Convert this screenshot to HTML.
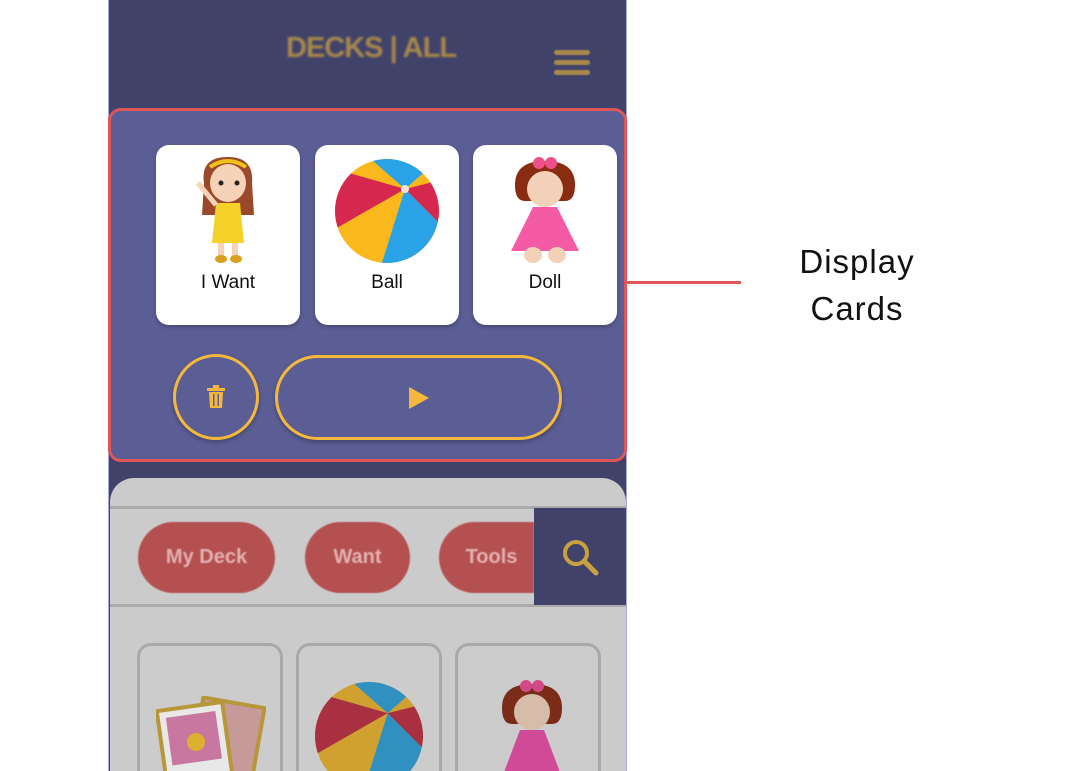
<!DOCTYPE html>
<html><head><meta charset="utf-8"><style>
html,body{margin:0;width:1080px;height:771px;overflow:hidden}
body{background:#fff;position:relative;font-family:"Liberation Sans",sans-serif}
.a{position:absolute}
.card{position:absolute;background:#fff;border-radius:13px;top:145px;width:144px;height:180px;box-shadow:0 2px 4px rgba(0,0,0,.25)}
.card span{position:absolute;left:0;right:0;top:127px;text-align:center;font-size:19px;color:#111}
.chip{position:absolute;top:522px;height:71px;background:#b55050;border-radius:36px;color:#e2b0b0;font-size:20px;line-height:71px;text-align:center;font-weight:bold;filter:blur(.5px)}
.lc{position:absolute;top:643px;width:140px;height:140px;border:3px solid #a9a9a9;border-radius:14px;background:#cccccc}
</style></head><body>
<div class="a" style="left:108px;top:0;width:519px;height:771px;background:#40426a;border-left:1px solid #a9a9e0;border-right:1px solid #a9a9e0;box-sizing:border-box"></div>
<div class="a" style="left:286px;top:32px;font-size:29px;font-weight:bold;color:#a9894b;letter-spacing:-1px;filter:blur(1px)">DECKS | ALL</div>
<div class="a" style="left:554px;top:50px;width:36px;height:5px;background:#a9894b;border-radius:3px;box-shadow:0 10px 0 #a9894b,0 20px 0 #a9894b;filter:blur(.6px)"></div>
<div class="a" style="left:108px;top:108px;width:519px;height:354px;background:#5b5e95;border:3px solid #e05555;border-radius:13px;box-sizing:border-box"></div>
<div class="card" style="left:156px"><svg class="a" style="left:30px;top:8px" width="84" height="112" viewBox="0 0 84 112"><path d="M18 30 Q14 4 42 4 Q68 4 66 30 L68 62 L16 62Z" fill="#9a4a2a"/><ellipse cx="42" cy="30" rx="18" ry="19" fill="#f6d2b8"/><path d="M24 14 Q42 2 60 14" stroke="#f2c21b" stroke-width="4" fill="none"/><circle cx="35" cy="30" r="2.5" fill="#222"/><circle cx="51" cy="30" r="2.5" fill="#222"/><path d="M30 50 L54 50 L58 90 L26 90Z" fill="#f5d22a"/><path d="M30 52 L12 30" stroke="#f6d2b8" stroke-width="5"/><rect x="32" y="90" width="6" height="14" fill="#f6d2b8"/><rect x="46" y="90" width="6" height="14" fill="#f6d2b8"/><ellipse cx="35" cy="106" rx="6" ry="4" fill="#d9a020"/><ellipse cx="50" cy="106" rx="6" ry="4" fill="#d9a020"/></svg><span>I Want</span></div>
<div class="card" style="left:315px"><svg class="a" style="left:20px;top:14px" width="104" height="104" viewBox="0 0 104 104"><defs><clipPath id="c"><circle cx="52" cy="52" r="52"/></clipPath></defs><g clip-path="url(#c)"><rect width="104" height="104" fill="#fbb81c"/><path d="M70 30 L0 10 L0 70Z" fill="#d6284f"/><path d="M70 30 L30 -5 L110 -5Z" fill="#2aa3e6"/><path d="M70 30 L110 20 L110 70Z" fill="#d6284f"/><path d="M70 30 L110 70 L104 110 L45 110Z" fill="#2aa3e6"/></g><circle cx="70" cy="30" r="4" fill="#f4e6d6"/></svg><span>Ball</span></div>
<div class="card" style="left:473px"><svg class="a" style="left:30px;top:10px" width="84" height="110" viewBox="0 0 84 110"><path d="M12 30 Q12 6 42 6 Q72 6 72 30 Q72 46 62 46 L22 46 Q12 46 12 30Z" fill="#8a2c12"/><ellipse cx="42" cy="34" rx="18" ry="18" fill="#f3d0b8"/><path d="M24 18 Q42 10 60 20 L60 14 Q42 4 24 14Z" fill="#8a2c12"/><circle cx="36" cy="8" r="6" fill="#f0508a"/><circle cx="48" cy="8" r="6" fill="#f0508a"/><path d="M30 52 L54 52 L76 96 L8 96Z" fill="#f55aa5"/><ellipse cx="30" cy="100" rx="9" ry="8" fill="#f3d0b8"/><ellipse cx="54" cy="100" rx="9" ry="8" fill="#f3d0b8"/></svg><span>Doll</span></div>
<div class="a" style="left:173px;top:354px;width:86px;height:86px;border:3px solid #f5b83d;border-radius:50%;box-sizing:border-box;box-shadow:0 2px 5px rgba(0,0,0,.3)"></div>
<svg class="a" style="left:205px;top:385px" width="22" height="24" viewBox="0 0 22 24"><rect x="2" y="3" width="18" height="3" fill="#f5b83d"/><rect x="8" y="0" width="6" height="3" fill="#f5b83d"/><path d="M4 7 H18 L17 23 H5Z" fill="#f5b83d"/><rect x="8" y="9" width="1.5" height="12" fill="#5b5e95"/><rect x="12.5" y="9" width="1.5" height="12" fill="#5b5e95"/></svg>
<div class="a" style="left:275px;top:355px;width:287px;height:85px;border:3px solid #f5b83d;border-radius:43px;box-sizing:border-box;box-shadow:0 2px 5px rgba(0,0,0,.3)"></div>
<svg class="a" style="left:409px;top:387px" width="20" height="22"><path d="M0 0 L20 11 L0 22Z" fill="#f5b83d"/></svg>
<div class="a" style="left:110px;top:478px;width:516px;height:293px;background:#cbcbcb;border-radius:24px 24px 0 0"></div>
<div class="a" style="left:110px;top:506px;width:516px;height:101px;border-top:3px solid #aaa;border-bottom:3px solid #aaa;box-sizing:border-box"></div>
<div class="chip" style="left:138px;width:137px">My Deck</div>
<div class="chip" style="left:305px;width:105px">Want</div>
<div class="chip" style="left:439px;width:95px;border-radius:36px 0 0 36px;text-indent:10px">Tools</div>
<div class="a" style="left:534px;top:508px;width:92px;height:97px;background:#40426a"></div>
<svg class="a" style="left:560px;top:537px" width="40" height="40"><circle cx="16" cy="16" r="11" stroke="#c9a040" stroke-width="4" fill="none"/><path d="M24 24 L36 36" stroke="#c9a040" stroke-width="5" stroke-linecap="round"/></svg>
<div class="lc" style="left:137px"><svg class="a" style="left:16px;top:50px" width="110" height="90"><rect x="40" y="6" width="62" height="80" fill="#c79a9a" stroke="#b8963a" stroke-width="4" transform="rotate(10 70 46)"/><rect x="6" y="10" width="66" height="78" fill="#e8e8e8" stroke="#b8963a" stroke-width="4" transform="rotate(-8 40 50)"/><rect x="14" y="18" width="50" height="48" fill="#c878a0" transform="rotate(-8 40 50)"/><circle cx="40" cy="46" r="9" fill="#dcb030"/></svg></div>
<div class="lc" style="left:296px"><svg class="a" style="left:16px;top:36px" width="108" height="108" viewBox="0 0 104 104"><defs><clipPath id="d"><circle cx="52" cy="52" r="52"/></clipPath></defs><g clip-path="url(#d)"><rect width="104" height="104" fill="#d0a030"/><path d="M70 30 L0 10 L0 70Z" fill="#a83040"/><path d="M70 30 L30 -5 L110 -5Z" fill="#3090c0"/><path d="M70 30 L110 20 L110 70Z" fill="#a83040"/><path d="M70 30 L110 70 L104 110 L45 110Z" fill="#3090c0"/></g></svg></div>
<div class="lc" style="left:455px"><svg class="a" style="left:32px;top:32px" width="84" height="110" viewBox="0 0 84 110"><path d="M12 30 Q12 6 42 6 Q72 6 72 30 Q72 46 62 46 L22 46 Q12 46 12 30Z" fill="#7a2c18"/><ellipse cx="42" cy="34" rx="18" ry="18" fill="#d8bcaa"/><circle cx="36" cy="8" r="6" fill="#d04a88"/><circle cx="48" cy="8" r="6" fill="#d04a88"/><path d="M30 52 L54 52 L76 110 L8 110Z" fill="#d04a98"/></svg></div>
<div class="a" style="left:627px;top:281px;width:114px;height:3px;background:#e05555"></div>
<div class="a" style="left:760px;top:238px;width:194px;text-align:center;font-size:33px;line-height:47px;color:#111;letter-spacing:1px">Display<br>Cards</div>
</body></html>
